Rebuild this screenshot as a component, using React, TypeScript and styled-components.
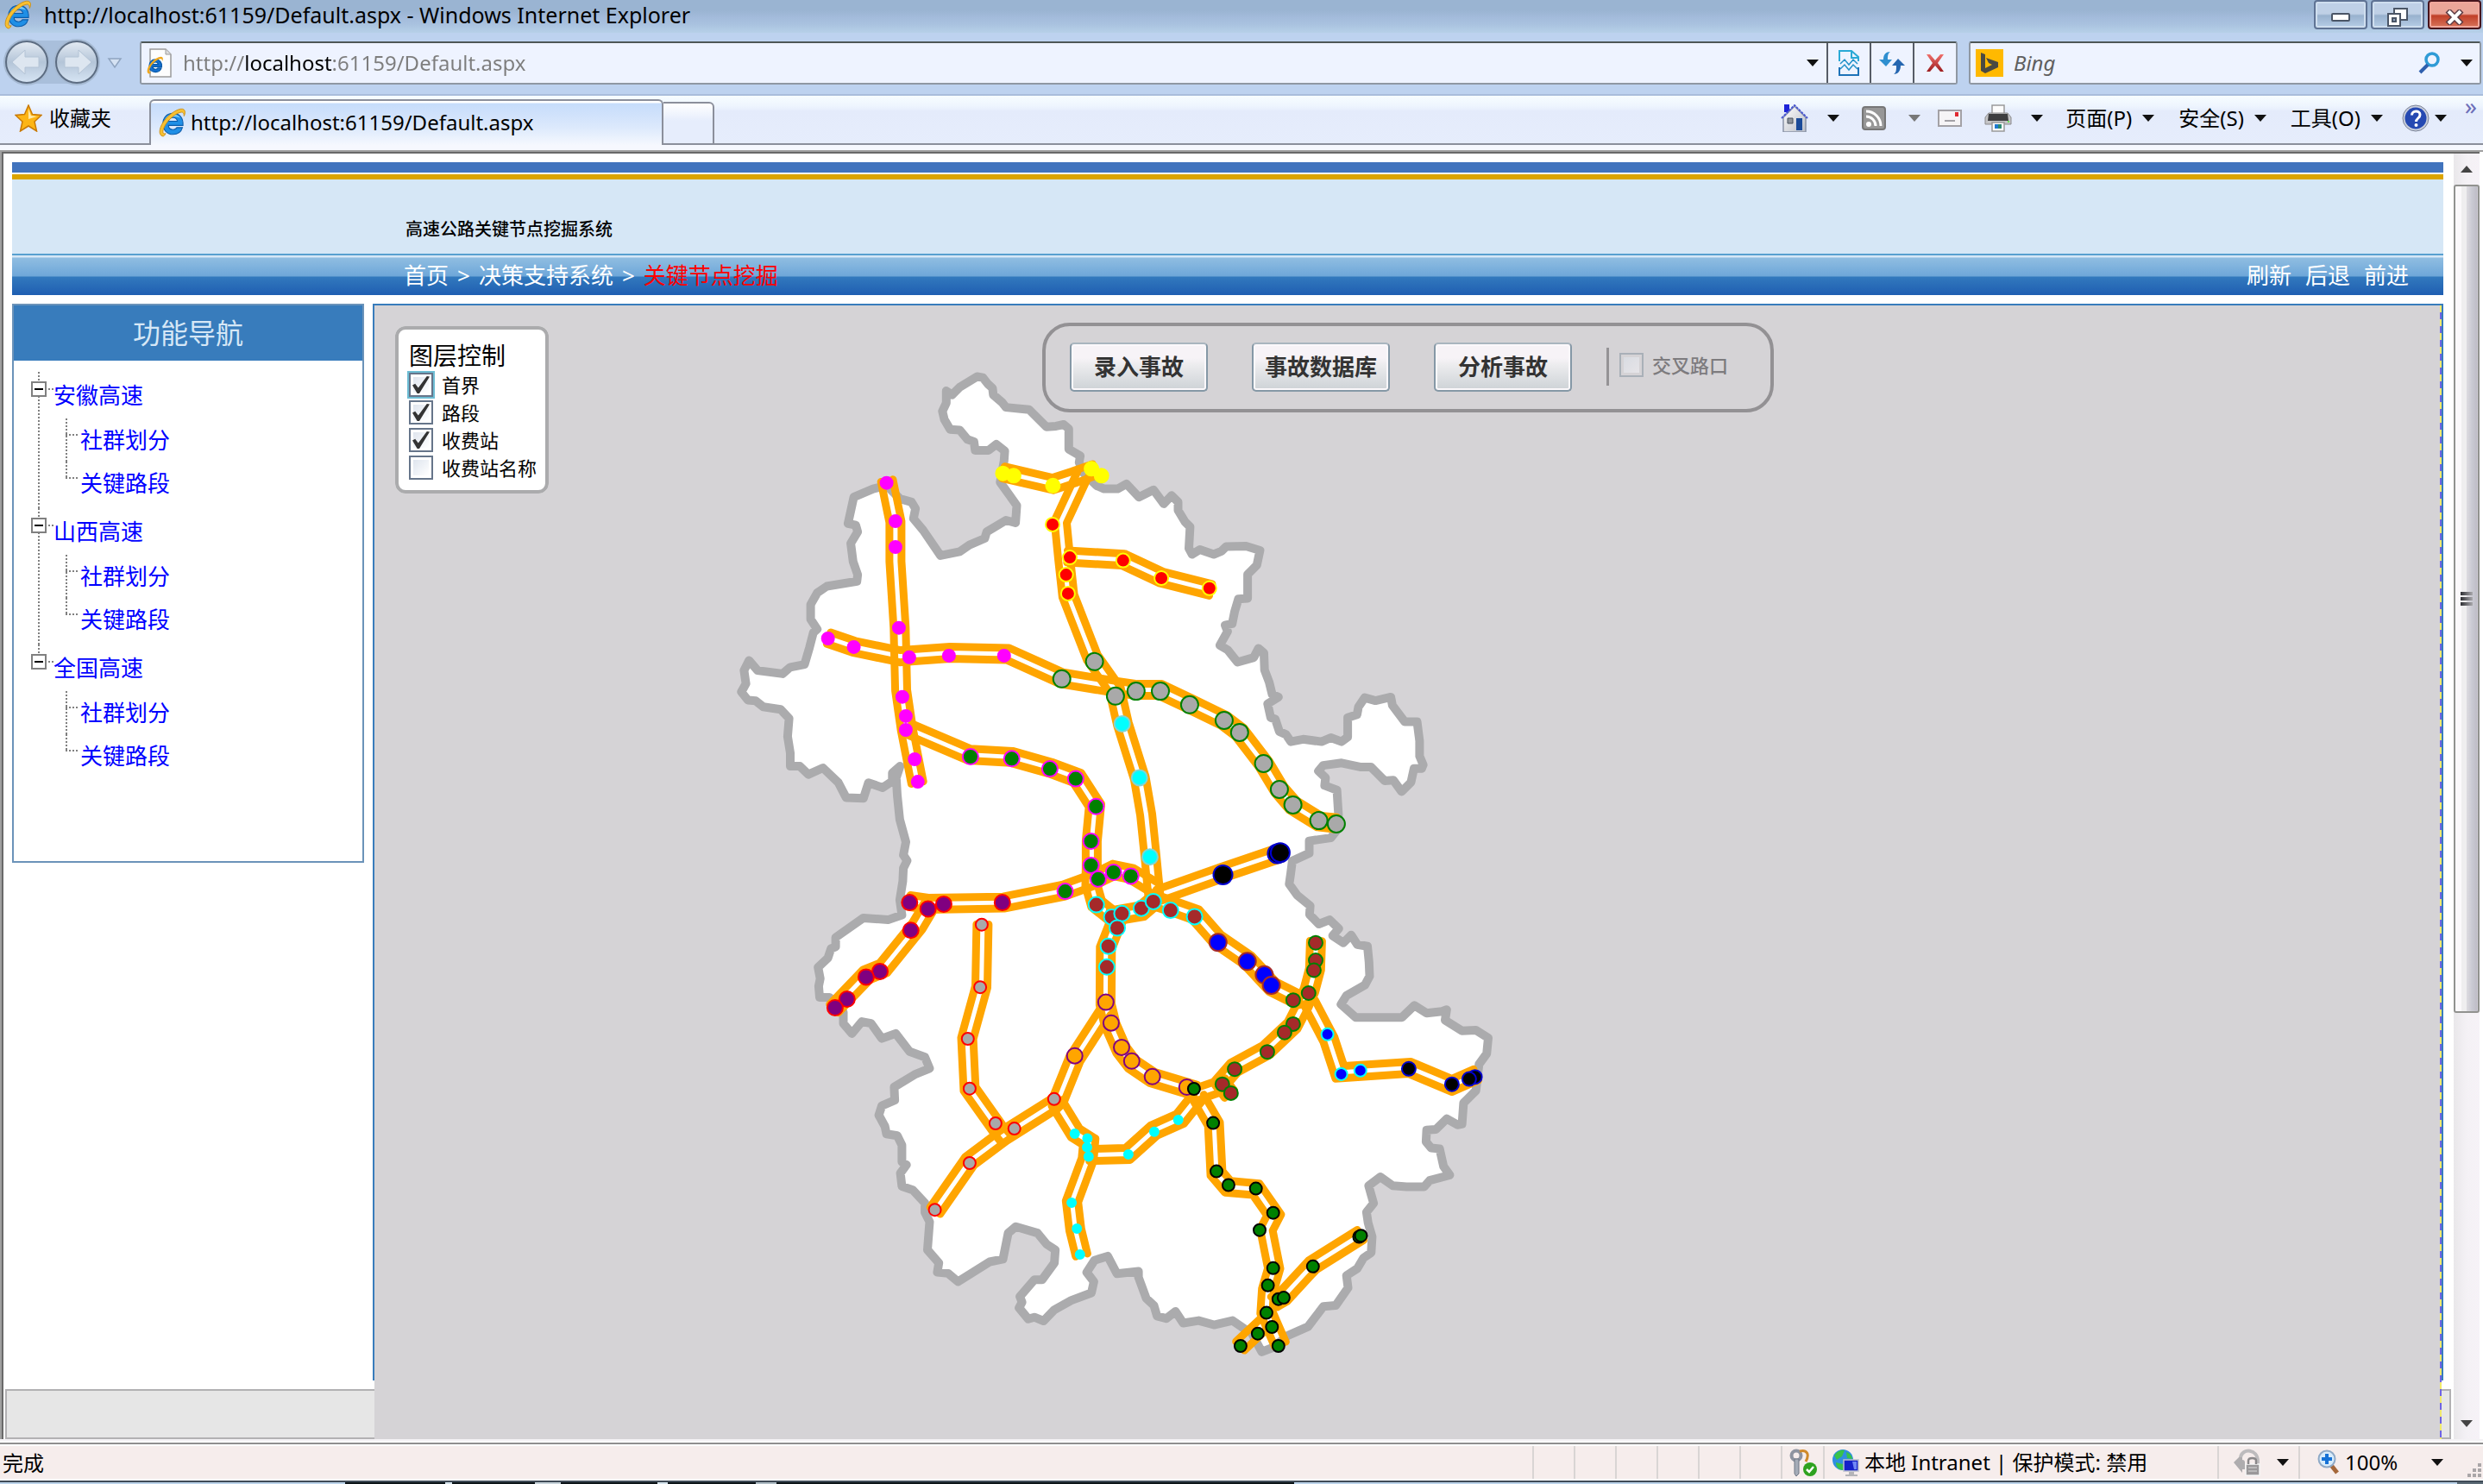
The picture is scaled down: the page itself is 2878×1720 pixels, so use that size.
import React from 'react';
import styled, { createGlobalStyle, css } from 'styled-components';

const Global = createGlobalStyle`
  *, *::before, *::after { box-sizing: border-box; }
  html, body { margin: 0; padding: 0; background: #fff; }
  body, button, input {
    font-family: "Noto Sans", "Noto Sans CJK SC", sans-serif;
    font-size: 24px;
    line-height: 32px;
    color: #000;
  }
  button { padding: 0; border: 0; background: none; }
  a { text-decoration: none; color: inherit; }
  ul { list-style: none; margin: 0; padding: 0; }
  svg { display: block; flex: none; }
`;

/* ---------- window frame ---------- */

const Window = styled.div`
  display: flex;
  flex-direction: column;
  height: 100vh;
  min-height: 1200px;
  overflow: hidden;
`;

const TitleBar = styled.header`
  display: flex;
  align-items: flex-start;
  height: 38px;
  flex: none;
  padding: 0 2px 0 4px;
  background: linear-gradient(#9ab4d2 0 12px, #a3bbdb 20px, #a9c2df 28px, #b6d0e8);
`;

const TitleText = styled.h1`
  margin: 1px 0 0 13px;
  flex: 1;
  font-size: 25px;
  line-height: 32px;
  font-weight: 400;
`;

const WindowButtons = styled.div`
  display: flex;
  gap: 4px;
`;

const WindowButton = styled.button<{ $danger?: boolean }>`
  display: flex;
  align-items: center;
  justify-content: center;
  width: 62px;
  height: 34px;
  padding-top: 6px;
  border: 2px solid ${(p) => (p.$danger ? '#46141c' : '#5f7394')};
  border-radius: 4px;
  box-shadow: inset 0 0 0 2px ${(p) => (p.$danger ? '#f0a79c' : '#cfdeee')};
  background: ${(p) =>
    p.$danger
      ? 'linear-gradient(#eba598 0 14px, #c03f28 16px, #d8755c)'
      : 'linear-gradient(#bfd0e6 0 14px, #98b1ce 16px, #b6cde6)'};
`;

const AddressRow = styled.div`
  display: flex;
  align-items: flex-start;
  flex: none;
  height: 71px;
  padding: 8px 2px 0 4px;
  background: #bdd2ef;
`;

const NavButtons = styled.div`
  display: flex;
  align-items: center;
  width: 158px;
  height: 52px;
`;

const Field = styled.div<{ $grow?: boolean }>`
  display: flex;
  align-items: center;
  height: 50px;
  margin-top: 2px;
  padding-left: 6px;
  border: 2px solid #8f98a3;
  border-top-color: #4d5757;
  border-radius: 3px;
  background: #eef3ff;
  ${(p) => (p.$grow ? 'flex: 1; min-width: 0;' : 'width: 594px; margin-left: 13px; padding-right: 8px;')}
`;

const AddressInput = styled.input`
  flex: 1;
  min-width: 0;
  margin-left: 12px;
  padding: 0;
  border: 0;
  outline: 0;
  color: #7d7d7d;
  background: linear-gradient(90deg, #7d7d7d 0 71px, #000 71px 174px, #7d7d7d 174px);
  background-clip: text;
  -webkit-background-clip: text;
  -webkit-text-fill-color: transparent;
`;

const SearchInput = styled.input`
  flex: 1;
  min-width: 0;
  margin-left: 12px;
  padding: 0;
  border: 0;
  outline: 0;
  background: none;
  font-style: italic;
  &::placeholder { color: #5f5f5f; opacity: 1; }
`;

const FieldButton = styled.button<{ $line?: boolean }>`
  display: flex;
  align-items: center;
  justify-content: center;
  width: ${(p) => (p.$line ? 50 : 32)}px;
  height: 46px;
  ${(p) => p.$line && 'border-left: 2px solid #565c66;'}
`;

/* ---------- tab strip ---------- */

const TabRow = styled.div`
  display: flex;
  align-items: flex-end;
  flex: none;
  height: 59px;
  border-top: 2px solid #a9bddb;
  background: linear-gradient(#f7fdff, #eef5fe 12px, #e4ebfb 18px, #e6edfc);
  box-shadow: inset 0 -2px 0 #8b8f9b;
`;

const Favorites = styled.button`
  display: flex;
  align-items: center;
  gap: 8px;
  width: 173px;
  height: 57px;
  padding: 0 0 6px 17px;
`;

const Tab = styled.div`
  display: flex;
  align-items: center;
  gap: 4px;
  width: 596px;
  height: 53px;
  padding: 0 0 2px 8px;
  border: 2px solid #8b8f9b;
  border-bottom: 0;
  border-radius: 6px 6px 0 0;
  background: linear-gradient(#fff 0 2px, #c6dcfb 3px, #dce9fc 60%, #f5f8fe);
`;

const NewTab = styled.button`
  width: 59px;
  height: 50px;
  border: 2px solid #8b8f9b;
  border-left: 0;
  border-radius: 0 6px 0 0;
  background: linear-gradient(#fff, #e6edfc 20px);
`;

const Commands = styled.div`
  display: flex;
  align-items: center;
  flex: 1;
  justify-content: flex-end;
  height: 57px;
  padding: 0 6px 6px 0;
`;

const Command = styled.button<{ $before: number; $inner?: number }>`
  display: flex;
  align-items: center;
  gap: ${(p) => p.$inner ?? 22}px;
  margin-left: ${(p) => p.$before}px;
`;

const More = styled.button`
  align-self: flex-start;
  width: 16px;
  margin-left: 20px;
  color: #6d6fb8;
  font-size: 28px;
  line-height: 22px;
`;

const TabShelf = styled.div`
  flex: none;
  height: 6px;
  background: #f6f8fe;
`;

/* ---------- document viewport ---------- */

const Viewport = styled.div`
  display: flex;
  flex: 1;
  min-height: 0;
  border-top: 2px solid #a0a0a0;
  border-left: 2px solid #a0a0a0;
  padding-right: 4px;
  background: #fff;
`;

const Page = styled.div`
  position: relative;
  display: flex;
  flex-direction: column;
  flex: 1;
  min-width: 0;
  padding: 10px 12px 0 10px;
  border-top: 2px solid #696969;
  border-left: 2px solid #696969;
`;

const Banner = styled.div`
  height: 106px;
  border-top: 12px solid #4173bd;
  background: linear-gradient(#fff 0 2px, #dba400 2px 8px, #d6e7f6 8px);
  padding: 52px 0 0 456px;
`;

const BannerTitle = styled.h2`
  margin: 0;
  font-size: 20px;
  line-height: 28px;
  font-weight: 500;
`;

const Crumbs = styled.nav`
  display: flex;
  align-items: center;
  justify-content: space-between;
  height: 48px;
  padding: 0 40px 0 454px;
  border-top: 2px solid #58a0d0;
  font-size: 26px;
  color: #fff;
  background: linear-gradient(#d6e7f6 0 2px, #8fbde1 3px, #6ea7d9 24px, #3279bd 25px, #1f5eb2);
`;

const CrumbGroup = styled.div`
  display: flex;
  gap: 10px;
`;

const ActionGroup = styled(CrumbGroup)`
  gap: 16px;
`;

const Current = styled.span`
  color: #f00;
`;

const Columns = styled.div`
  display: flex;
  gap: 10px;
  flex: 1;
  min-height: 0;
  padding-top: 10px;
`;

const FooterBand = styled.div`
  position: absolute;
  left: 2px;
  right: 3px;
  bottom: 0;
  height: 58px;
  border: 2px solid #b2b1b3;
  background: #e6e6e6;
`;

/* ---------- navigation tree ---------- */

const SidePanel = styled.aside`
  flex: none;
  align-self: flex-start;
  width: 408px;
  height: 648px;
  border: 2px solid #6b93b9;
  background: #fff;
`;

const SideTitle = styled.h3`
  margin: 0;
  height: 64px;
  font-size: 32px;
  line-height: 64px;
  font-weight: 400;
  text-align: center;
  color: #d6e7f6;
  background: #387cbc;
`;

const dotsDown = 'repeating-linear-gradient(#808080 0 2px, transparent 2px 4px)';
const dotsAcross = 'repeating-linear-gradient(90deg, #808080 0 2px, transparent 2px 4px)';

const Tree = styled.ul`
  padding: 13px 0 0 20px;
  font-size: 26px;
  color: #00f;
`;

const Branch = styled.li<{ $last?: boolean }>`
  height: 158px;
  background: ${dotsDown} 8px 0 / 2px ${(p) => (p.$last ? '20px' : '100%')} no-repeat;
`;

const BranchRow = styled.div`
  display: flex;
  gap: 8px;
  height: 54px;
  line-height: 54px;
  background: ${dotsAcross} 20px 19px / 8px 2px no-repeat;
`;

const Toggle = styled.button`
  display: flex;
  align-items: center;
  justify-content: center;
  width: 18px;
  height: 18px;
  margin-top: 11px;
  border: 2px solid #808080;
  background: #fff;
  &::before { content: ''; width: 10px; height: 2px; background: #000; }
`;

const Leaf = styled.li<{ $last?: boolean }>`
  height: 50px;
  margin-left: 40px;
  padding-left: 17px;
  line-height: 50px;
  background:
    ${dotsAcross} 0 18px / 16px 2px no-repeat,
    ${dotsDown} 0 0 / 2px ${(p) => (p.$last ? '20px' : '100%')} no-repeat;
`;

/* ---------- map area ---------- */

const MapArea = styled.main`
  position: relative;
  z-index: 1;
  display: flex;
  flex: 1;
  min-width: 0;
  padding: 2px 2px 0 2px;
  &::before {
    content: '';
    position: absolute;
    inset: 0 0 68px 0;
    border: 2px solid #387cbc;
    border-bottom: 0;
  }
`;

const MapCanvas = styled.div`
  position: relative;
  flex: 1;
  overflow: hidden;
  padding: 76px 0 0 406px;
  background:
    repeating-linear-gradient(#f1ea6b 0 8px, #6f64e4 8px 16px) right top / 2px 100% no-repeat,
    #d5d3d6;
`;

const LayerPanel = styled.fieldset`
  position: absolute;
  left: 24px;
  top: 24px;
  width: 178px;
  margin: 0;
  padding: 12px 0 10px 12px;
  border: 4px solid #ababad;
  border-radius: 12px;
  background: #fff;
  font-size: 22px;
`;

const LayerTitle = styled.div`
  font-size: 28px;
  line-height: 36px;
`;

const CheckLine = styled.label<{ $disabled?: boolean }>`
  display: flex;
  align-items: center;
  gap: 10px;
  height: 32px;
  font-size: 22px;
  white-space: nowrap;
  ${(p) => p.$disabled && 'padding-bottom: 4px; height: 36px; font-weight: 500; color: #7d7b7e;'}
`;

const Check = styled.input<{ $focus?: boolean }>`
  appearance: none;
  flex: none;
  width: 28px;
  height: 28px;
  margin: 0;
  border: 2px solid #66758a;
  background: linear-gradient(135deg, #dfe5ee, #fff) content-box #fff;
  padding: 3px;
  display: grid;
  place-content: center;
  ${(p) => p.$focus && css`box-shadow: 0 0 0 2px #6dbdd4;`}
  &:disabled {
    border-color: #a9b0b8;
    background: linear-gradient(135deg, #d9dce2, #e6e4e8) content-box #ebe9ec;
  }
  &:checked::before {
    content: '';
    width: 20px;
    height: 20px;
    background: #333;
    clip-path: polygon(0 52%, 16% 44%, 34% 68%, 84% 0, 100% 2%, 40% 100%, 28% 100%);
  }
`;

const ToolPanel = styled.div`
  position: absolute;
  top: 20px;
  left: 50%;
  transform: translateX(-50%);
  display: flex;
  align-items: center;
  width: 848px;
  height: 104px;
  padding: 0 0 2px 28px;
  border: 4px solid #939194;
  border-radius: 32px;
`;

const ToolButton = styled.button`
  width: 160px;
  height: 57px;
  margin-right: 51px;
  border: 2px solid #8598a6;
  border-top-color: #a9b5bf;
  border-radius: 5px;
  box-shadow: inset 0 0 0 2px #fbf8fb;
  background: linear-gradient(#f7f3f7 0 30%, #ececee 45%, #cdd2d6);
  font-size: 26px;
  font-weight: 700;
  color: #333;
`;

const Divider = styled.span`
  width: 3px;
  height: 44px;
  margin: 0 12px 0 -11px;
  background: #959396;
`;

const Scroll = styled.div`
  display: flex;
  flex-direction: column;
  align-items: center;
  width: 30px;
  border-top: 2px solid #696969;
  background: linear-gradient(90deg, #e9e7ea, #f4f1f5 50%, #f6f2f7);
`;

const ScrollButton = styled.button`
  display: flex;
  align-items: center;
  justify-content: center;
  width: 30px;
  height: 36px;
`;

const Thumb = styled.div`
  display: flex;
  flex-direction: column;
  align-items: center;
  justify-content: center;
  gap: 2px;
  width: 30px;
  height: calc(65% - 8px);
  border: 2px solid #91928f;
  border-radius: 3px;
  background: linear-gradient(90deg, #fbf9fb 0 25%, #efeeef 27% 48%, #dddbe0 50%, #c9c9d2 75%, #bfbdc7 95%, #d5d3da);
`;

const Grip = styled.i`
  width: 14px;
  height: 4px;
  background: linear-gradient(90deg, #2e2e33, #aaa9ad);
`;

/* ---------- status bar ---------- */

const StatusBar = styled.footer`
  display: flex;
  align-items: stretch;
  flex: none;
  height: 48px;
  border-top: 2px solid #f4f2f5;
  border-bottom: 2px solid #fff;
  background: linear-gradient(#fff 0 2px, #8f8f8f 2px 4px, #fff 4px 6px, #f6edec 6px);
`;

const StatusMessage = styled.div`
  flex: 1;
  padding: 10px 0 0 3px;
`;

const StatusCell = styled.div<{ $width: number; $pad?: number }>`
  display: flex;
  align-items: center;
  width: ${(p) => p.$width}px;
  margin-top: 6px;
  padding-left: ${(p) => p.$pad ?? 0}px;
  gap: 6px;
  border-left: 2px solid #d9d5d4;
`;

const Push = styled.span`
  flex: 1;
`;

const TaskbarEdge = styled.div`
  flex: none;
  height: 4px;
  border-top: 2px solid #3f4b57;
  background: linear-gradient(90deg, #bcd3ea 0 400px, #0d1518 400px 516px, #d5e3ec 516px 524px, #0d1518 524px 620px,
    #c7d3da 620px 650px, #0d1518 650px 762px, #d5e3ec 762px 774px, #0d1518 774px 876px, #aebcc4 876px 900px,
    #0d1518 900px 1500px, #bcd3ea 1500px calc(100% - 30px), #5b6a75 calc(100% - 30px));
`;

/* ---------- icons ---------- */

const Caret = ({ color = '#111' }: { color?: string }) => (
  <svg width="14" height="8" viewBox="0 0 14 8"><path d="M0 0h14L7 8z" fill={color} /></svg>
);

const IeLogo = () => (
  <svg width="34" height="34" viewBox="1 0 31 32">
    <path d="M17 6C10 6 6 11 6 17.500S10.500 29 17 29c5 0 8.800-2.500 10.300-7.500h-6.100c-.8 1.600-2.200 2.300-4.100 2.300-3 0-4.900-1.700-5.100-4.600h15.900C28.400 11 24.300 6 17 6zm-5 8.600c.5-2.600 2.200-4.100 4.900-4.100s4.500 1.500 4.900 4.100z" fill="#1f8fe6" stroke="#0b5cab" strokeWidth="1" />
    <path d="M8 13c2-4 5-6 9-6 3 0 6 1 8 4-5-2-11-2-17 2z" fill="#7fd0fb" />
    <path d="M6 31C0 30 2 20 9 12 16 4 26-1 29 2c2 2 1 5 0 7 0-3-1-5-4-4-5 1-12 7-16 13-4 7-4 11 0 10-1 2-2 3-3 3z" fill="#f7c031" stroke="#c98a10" strokeWidth=".8" />
  </svg>
);

const PageLogo = () => (
  <svg width="30" height="34" viewBox="0 0 30 34">
    <path d="M4 1h18l6 6v26H4z" fill="#fdfdfd" stroke="#9b9b9b" strokeWidth="1.500" />
    <path d="M22 1v6h6" fill="#ddd" stroke="#9b9b9b" />
    <g transform="translate(-1 9) scale(.66)">
      <path d="M17 6C10 6 6 11 6 17.500S10.500 28 17 28c5 0 8.800-2.500 10.300-7h-6.100c-.8 1.600-2.200 2.300-4.100 2.300-3 0-4.900-1.700-5.100-4.600h15.900C28.400 11 24.300 6 17 6zm-5 8.600c.5-2.600 2.200-4.100 4.900-4.100s4.500 1.500 4.900 4.100z" fill="#1570d0" stroke="#0b5cab" strokeWidth="2" />
      <path d="M6 31C0 30 2 20 9 12 16 4 26-1 29 2c2 2 1 5 0 7 0-3-1-5-4-4-5 1-12 7-16 13-4 7-4 11 0 10-1 2-2 3-3 3z" fill="#f0a81c" />
    </g>
  </svg>
);

const NavOrbs = () => (
  <svg width="112" height="56" viewBox="0 0 112 56">
    <defs>
      <linearGradient id="orb" x1="0" y1="0" x2="0" y2="1">
        <stop offset="0" stopColor="#e4ebf3" />
        <stop offset=".5" stopColor="#b4c5d8" />
        <stop offset="1" stopColor="#d7e5f4" />
      </linearGradient>
    </defs>
    <path d="M27 3h58v50H27z" fill="#a9bfdb" />
    <circle cx="27" cy="28" r="27" fill="#a6bad3" />
    <circle cx="85" cy="28" r="27" fill="#a6bad3" />
    <circle cx="27" cy="28" r="24" fill="url(#orb)" stroke="#5d6d82" strokeWidth="2" />
    <circle cx="85" cy="28" r="24" fill="url(#orb)" stroke="#5d6d82" strokeWidth="2" />
    <path d="M10 28l15-14v8h16v12H25v8z" fill="#dde6f0" stroke="#b4c4d6" />
    <path d="M102 28L87 14v8H71v12h16v8z" fill="#dde6f0" stroke="#b4c4d6" />
  </svg>
);

const Star = () => (
  <svg width="32" height="32" viewBox="0 0 32 32">
    <path d="M16 1l4.500 10.500L31 12.500l-8 7.500 2.500 11L16 25l-9.500 6L9 20l-8-7.500 10.500-1z" fill="#fdb515" stroke="#c97a06" strokeWidth="1.500" />
    <path d="M16 5l3 8 7 1-10 3z" fill="#ffe9a8" />
  </svg>
);

const Compat = () => (
  <svg width="24" height="30" viewBox="0 0 24 30" fill="none" strokeWidth="2">
    <path d="M1 13V1h14l8 7v5" stroke="#2aa9d6" />
    <path d="M15 1v8h8" stroke="#2aa9d6" />
    <path d="M2 16l5-5 5 6 5-6 5 5M2 22l5-5 5 6 5-6 5 5" stroke="#2391c8" strokeWidth="1.500" />
    <path d="M1 20v9h22v-9" stroke="#1d72b8" />
  </svg>
);

const Refresh = () => (
  <svg width="30" height="28" viewBox="0 0 30 28">
    <path d="M13 1C8 1 5 4 5 10H0l8 8 7-8h-5c0-4 0-7 3-9z" fill="#2f8fd0" />
    <path d="M17 27c5 0 8-4 8-10h5l-8-8-7 8h5c0 5 0 8-3 10z" fill="#2566b0" />
  </svg>
);

const Stop = () => (
  <svg width="22" height="22" viewBox="0 0 22 22">
    <defs>
      <linearGradient id="stop" x1="0" y1="0" x2="0" y2="1"><stop offset="0" stopColor="#f0706c" /><stop offset="1" stopColor="#9c1c20" /></linearGradient>
    </defs>
    <path d="M1 1h4l6 7 6-7h4l-7 10 7 10h-4l-6-7-6 7H1l7-10z" fill="url(#stop)" />
  </svg>
);

const BingLogo = () => (
  <svg width="32" height="32" viewBox="0 0 32 32">
    <path d="M0 0h32v32H0z" fill="#ffb900" />
    <path d="M6 4l5 2v16l8-4-4-2-3-6 14 5v6L11 28l-5-3z" fill="#4a4a42" />
  </svg>
);

const Magnifier = () => (
  <svg width="26" height="26" viewBox="0 0 26 26" fill="none">
    <circle cx="16" cy="9" r="7" stroke="#2f9bd6" strokeWidth="3.500" />
    <path d="M11 15L2 24" stroke="#2f5fae" strokeWidth="4" />
  </svg>
);

const Home = () => (
  <svg width="32" height="32" viewBox="0 0 32 32">
    <defs>
      <linearGradient id="wall" x1="0" y1="0" x2="1" y2="1"><stop offset="0" stopColor="#fff" /><stop offset="1" stopColor="#b9bdc6" /></linearGradient>
    </defs>
    <path d="M4 0h6v9H4z" fill="#1c22d8" />
    <path d="M3 15L16 2l13 13v17H3z" fill="url(#wall)" stroke="#8a94a8" strokeWidth="1.500" />
    <path d="M1 16L16 1l15 15" fill="none" stroke="#4a58d0" strokeWidth="2" strokeDasharray="3 1" />
    <path d="M18 16h7v14h-7z" fill="#1a4a99" />
    <path d="M8 16h6v6H8z" fill="#8f949c" stroke="#47505c" />
  </svg>
);

const Rss = () => (
  <svg width="28" height="28" viewBox="0 0 28 28" fill="none">
    <rect x="1" y="1" width="26" height="26" rx="3" fill="#979797" stroke="#767676" strokeWidth="2" />
    <circle cx="8" cy="21" r="3" fill="#fff" />
    <path d="M5 12a11 11 0 0 1 11 11M5 6a17 17 0 0 1 17 17" stroke="#fff" strokeWidth="3" />
  </svg>
);

const Mail = () => (
  <svg width="28" height="20" viewBox="0 0 28 20">
    <path d="M1 1h26v18H1z" fill="#f6f4f6" stroke="#a3a1a6" strokeWidth="2" />
    <path d="M20 3h4v5h-4z" fill="#e02a32" />
    <path d="M8 13h12" stroke="#a3a1a6" strokeWidth="2" />
  </svg>
);

const Printer = () => (
  <svg width="32" height="32" viewBox="0 0 32 32">
    <path d="M9 1h14v11H9z" fill="#fcfcfc" stroke="#9a9a9a" strokeWidth="1.500" />
    <path d="M5 10h22l4 5v8H1v-8z" fill="#c4c4c6" stroke="#8b8b8d" />
    <path d="M5 11h22l1 8H4z" fill="#3e3e40" />
    <path d="M9 21h14v10H9z" fill="#fff" stroke="#999" strokeWidth="1.500" />
    <path d="M12 23h4v5h-4z" fill="#1f7ad1" />
    <path d="M16 23h4v5h-4z" fill="#2b8a72" />
    <path d="M27 19h2v2h-2z" fill="#6ee05a" />
  </svg>
);

const Help = () => (
  <svg width="32" height="32" viewBox="0 0 32 32">
    <circle cx="16" cy="16" r="15" fill="#c9cfdb" stroke="#7a8298" />
    <circle cx="16" cy="16" r="12.500" fill="#2549b2" />
    <path d="M11.500 12.500c0-6 9.500-6 9.500-.5 0 4-4.500 4-4.500 8" fill="none" stroke="#fff" strokeWidth="3" />
    <circle cx="16.500" cy="24" r="2" fill="#fff" />
  </svg>
);

const Keys = () => (
  <svg width="32" height="32" viewBox="0 0 32 32">
    <circle cx="8" cy="8" r="5.500" fill="none" stroke="#8d93a0" strokeWidth="4" />
    <path d="M12 3c8-2 12 3 7 12" fill="none" stroke="#d08a2a" strokeWidth="3" />
    <path d="M6 12h5v17l-3 3-2-3z" fill="#a5acb8" stroke="#6f7684" />
    <circle cx="24" cy="24" r="8" fill="#2ea21f" />
    <path d="M20 24l3 3 5-6" fill="none" stroke="#fff" strokeWidth="2.500" />
  </svg>
);

const Globe = () => (
  <svg width="32" height="32" viewBox="0 0 32 32">
    <circle cx="13" cy="13" r="12" fill="#2f8fe0" />
    <path d="M3 8c4-6 9-7 12-6l-3 7-6 4zM5 16l8 2 1 7C8 25 5 21 5 16zM17 4c4 1 7 5 7 8l-6-1z" fill="#39c24a" />
    <path d="M14 13h17v13H14z" fill="#1420c8" stroke="#b9bfcc" strokeWidth="1.500" />
    <path d="M24 15h5v9h-3z" fill="#6f86f5" />
    <path d="M20 27h6v3h4v2H16v-2h4z" fill="#b4b4b8" />
  </svg>
);

const Lock = () => (
  <svg width="34" height="32" viewBox="0 0 34 32">
    <path d="M2 16L12 6v7c2 0 3 1 3 3v8h-3v4z" fill="#aeacae" />
    <path d="M10 10C12-1 30 0 30 15v4" fill="none" stroke="#bdbbbd" strokeWidth="4" />
    <path d="M16 18h16v13H16z" fill="#9a989a" stroke="#f6f6f6" strokeWidth="1.500" />
    <path d="M19 18v-4c0-4 9-4 9 0v4" fill="none" stroke="#8a888a" strokeWidth="2.500" />
    <path d="M19 22h10M19 26h10" stroke="#c5c3c5" strokeWidth="1.500" />
  </svg>
);

const ZoomGlass = () => (
  <svg width="26" height="30" viewBox="0 0 26 30">
    <path d="M15 17l8 10" stroke="#a5673a" strokeWidth="5" />
    <circle cx="11" cy="11" r="9.500" fill="#d8ecfb" stroke="#8fa9c6" strokeWidth="2" />
    <path d="M11 5v12M5 11h12" stroke="#1672d6" strokeWidth="4" />
  </svg>
);

/* ---------- map data: every sheet has its own origin and scale ---------- */

type Pt = [number, number];
type SheetName = 'nw' | 'ne' | 'sw' | 'se';

const sheets: Record<SheetName, { x: number; y: number; kx: number; ky: number }> = {
  nw: { x: 820, y: 360, kx: 2.24, ky: 2.6133 },
  ne: { x: 1180, y: 480, kx: 2.8, ky: 2.8 },
  sw: { x: 840, y: 900, kx: 2.8, ky: 2.3059 },
  se: { x: 1200, y: 960, kx: 2.8, ky: 2.45 },
};

const on = (name: SheetName, list: string): Pt[] => {
  const s = sheets[name];
  return list.trim().split(/\s+/).map((pair) => {
    const [a, b] = pair.split(',').map(Number);
    return [s.x + a / s.kx, s.y + b / s.ky];
  });
};

const toPath = (pts: Pt[]) => 'M' + pts.map(([x, y]) => `${x.toFixed(1)} ${y.toFixed(1)}`).join('L');

const province: Pt[] = [
  ...on('nw', `770,455 772,425 750,405 730,423 695,423 692,397 675,390 655,362 630,360 615,330 610,305 620,280 620,243
    635,255 655,232 700,200 715,203 728,222 740,235 742,255 765,278 775,293 835,300 880,352 905,350 925,345 938,358
    938,420 968,440 965,460 975,490 1010,530 1030,540 1065,540 1088,525 1120,565 1158,543 1185,585 1205,560 1222,580
    1222,605 1240,640 1253,655 1250,720`),
  ...on('ne', `565,455 590,440 635,455 660,445 675,430 740,428 785,442 775,490 745,520 745,598 715,600 703,640 695,680
    672,685 680,705 655,750 680,765 712,805 765,790 780,760 798,775 800,830 815,870 825,910 845,918 810,940 820,985
    835,990 848,1030 870,1040 885,1063 925,1055 985,1063 1015,1050 1050,1063 1070,1048 1070,985 1100,975 1105,950
    1125,920 1160,930 1210,918 1215,945 1255,998 1295,998 1303,1060 1303,1110 1315,1138 1310,1150 1285,1150 1275,1195
    1245,1225 1218,1188 1190,1190 1160,1160 1145,1145 1110,1145 1050,1132 990,1140 975,1158 998,1180 995,1205
    1035,1220 1040,1300 1035,1350 1015,1375 945,1385 945,1425 890,1450 885,1490 880,1525`),
  ...on('se', `850,190 892,220 890,245 920,272 955,260 985,285 965,305 1000,325 1025,303 1045,330 1078,335 1083,380
    1085,420 1070,445 1010,475 992,500 1040,537 1190,537 1230,503 1270,525 1320,520 1335,515 1330,545 1385,575
    1430,573 1470,595 1465,640 1440,670 1430,745 1390,780 1385,840 1370,842 1335,825 1300,855 1270,857 1268,890
    1285,908 1312,910 1325,960 1345,985 1280,1000 1262,1018 1205,1018 1160,1015 1120,990 1082,1015 1098,1065
    1075,1090 1080,1120 1093,1160 1090,1205 1065,1220 1045,1250 1010,1270 1015,1305 975,1355 935,1358 885,1415
    820,1440 770,1475 735,1487 700,1430 685,1425 640,1398 580,1410 530,1398 480,1405 455,1372 425,1392 395,1385
    385,1355 360,1335 335,1275 335,1258 265,1265 235,1215`),
  ...on('sw', `1200,1293 1175,1325 1198,1350 1190,1380 1125,1400 1070,1425 1035,1455 1005,1445 985,1450 955,1420
    965,1405 958,1390 1005,1345 1030,1345 1070,1300 1073,1265 1045,1250 1015,1220 945,1203 920,1220 903,1290 860,1297
    757,1350 725,1328 690,1325 695,1300 658,1265 665,1190 650,1165 650,1140 610,1105 575,1095 570,1060 590,1038
    575,1030 575,985 560,960 525,955 520,935 500,905 510,880 552,865 550,830 620,795 665,780 650,750 600,735 555,687
    510,700 475,660 445,655 413,687 385,660 385,630 340,590 308,590 305,560 310,540 303,510 335,485 345,460 360,455
    360,430 450,378 530,383 575,370 568,330 578,280 580,245 592,225 580,210 588,175 568,115 560,50`),
  ...on('nw', `490,1415 500,1380 480,1400 480,1425 455,1445 418,1430 405,1477 360,1475 340,1430 300,1385 262,1405
    240,1380 215,1380 215,1340 208,1290 212,1235 190,1208 145,1200 125,1182 105,1180 88,1155 100,1130 95,1090
    108,1060 130,1090 195,1100 215,1080 252,1072 265,1020 275,975 285,965 268,935 268,890 285,855 310,835 388,820
    390,800 378,760 372,705 390,670 385,650 365,645 380,565 430,540 465,530 500,570 530,580 540,600 535,630 560,665
    605,742 655,730 680,710 720,690 725,670 775,635 800,643 803,590 785,560 760,520`),
];

const roads: Pt[][] = [
  on('nw', '466,515 488,640 488,760 499,960 503,1150 518,1270 545,1430'),
  [
    ...on('nw', '315,992 380,1018 500,1047 630,1036 780,1040'),
    ...on('ne', '142,857 315,885 385,895 462,895 557,940 670,995 720,1033 798,1135 848,1218 893,1270 977,1322 1033,1328'),
  ],
  on('nw', '768,490 897,525 950,505 1005,482'),
  [
    ...on('nw', '975,495 917,640'),
    ...on('ne', '150,470 163,590 241,790 315,895 340,1005 395,1180 416,1300 430,1435 442,1560'),
  ],
  on('ne', '160,462 341,472 465,530 625,570'),
  [
    ...on('nw', '525,1268 680,1345 790,1352 890,1385 960,1415'),
    ...on('ne', '250,1270 239,1385 239,1465'),
    ...on('sw', '1190,290 1207,340 1260,375'),
  ],
  on('sw', '600,333 660,340 905,337 1100,305 1200,275 1262,250 1320,260 1400,300'),
  on('sw', '665,345 625,400 515,512 460,530 355,620'),
  on('se', '400,190 610,125 795,70'),
  on('se', '245,250 345,235 385,205 440,220 520,245 590,315 690,375 770,450 850,485 890,480'),
  on('se', '890,495 953,600 988,693 1215,680 1352,730 1430,700'),
  on('se', '265,260 229,340 228,500 245,560 280,630 315,670 380,708 520,745'),
  on('se', '525,755 590,735 645,680 750,630 835,560 870,500 890,460 908,400 911,320'),
  on('se', '600,720 630,755'),
  on('se', '525,765 470,825 385,858 300,925 175,928'),
  on('se', '70,780 130,865 175,890 170,940 119,1060 130,1140 150,1212'),
  [...on('se', '228,520 128,655 75,770'), ...on('sw', '1069,875 905,960 795,1028 683,1160')],
  on('sw', '837,395 833,562 787,700 795,835 890,945 910,965'),
  on('se', '530,765 580,840 588,980 625,1018 717,1025 775,1098 750,1140 775,1250 755,1310 750,1375 795,1465'),
  on('se', '750,1400 665,1470'),
  on('se', '775,1345 805,1330 900,1240 1055,1155'),
];

/* carriageways run parallel to the centre line */
const shift = (pts: Pt[], d: number): Pt[] =>
  pts.map((p, i) => {
    const a = pts[Math.max(i - 1, 0)];
    const b = pts[Math.min(i + 1, pts.length - 1)];
    const unit = (u: Pt, v: Pt): Pt => {
      const l = Math.hypot(v[0] - u[0], v[1] - u[1]) || 1;
      return [(v[0] - u[0]) / l, (v[1] - u[1]) / l];
    };
    const s = i === 0 ? unit(p, b) : unit(a, p);
    const e = i === pts.length - 1 ? s : unit(p, b);
    const nx = -(s[1] + e[1]);
    const ny = s[0] + e[0];
    const l = Math.hypot(nx, ny) || 1;
    const k = d / Math.max(0.6, (nx * -s[1] + ny * s[0]) / l);
    return [p[0] + (nx / l) * k, p[1] + (ny / l) * k];
  });

type Station = { fill: string; ring: string; r: number; at: Pt[] };

const stations: Station[] = [
  { fill: '#ff00ff', ring: '#ff00ff', r: 7, at: on('nw', '465,522 488,638 488,716 497,961 313,993 380,1019 524,1050 627,1045 770,1045 506,1170 515,1228 515,1270 538,1359 546,1427') },
  { fill: '#ffff00', ring: '#ffff00', r: 8, at: on('nw', '767,493 795,500 897,530 997,479 1023,500') },
  { fill: '#ff0000', ring: '#ffff00', r: 8, at: on('ne', '112,358 168,465 156,521 162,582 341,475 465,532 621,565') },
  { fill: '#00ffff', ring: '#7fd4d4', r: 9, at: on('ne', '338,1005 394,1180 428,1437') },
  { fill: '#a9a9a9', ring: '#008000', r: 10, at: on('ne', '248,803 142,859 316,915 383,899 462,899 557,943 669,994 719,1033 797,1134 848,1218 892,1268 976,1319 1033,1330') },
  { fill: '#008000', ring: '#ff00ff', r: 9, at: [...on('nw', '683,1351 790,1357 889,1388 956,1418 1009,1502'), ...on('ne', '237,1386 237,1464'), ...on('sw', '1212,274 1262,256 1318,266 1105,307')] },
  { fill: '#000000', ring: '#0000cd', r: 11, at: on('se', '609,132 785,72 795,69') },
  { fill: '#800080', ring: '#ff0000', r: 9, at: on('sw', '600,337 660,354 711,341 901,337 604,411 504,521 459,536 397,595 358,618') },
  { fill: '#a52a2a', ring: '#00ffff', r: 9, at: on('se', '198,217 248,252 281,242 266,283 237,335 232,394 344,227 383,208 439,233 517,251') },
  { fill: '#0000ff', ring: '#a52a2a', r: 10, at: on('se', '593,324 688,378 743,416 766,446') },
  { fill: '#a52a2a', ring: '#008000', r: 8, at: on('se', '910,325 910,375 904,403 887,468 837,488 837,556 809,580 753,635 647,684 607,727 635,752') },
  { fill: '#0000ff', ring: '#00ffff', r: 7, at: on('se', '948,585 993,698 1055,688') },
  { fill: '#000000', ring: '#0000cd', r: 8, at: on('se', '1212,683 1352,727 1427,706 1408,712') },
  { fill: '#ffa500', ring: '#800080', r: 9, at: on('se', '229,494 246,553 280,622 313,661 380,705 492,735 128,646') },
  { fill: '#a9a9a9', ring: '#ff0000', r: 7, at: on('sw', '834,396 829,563 789,701 795,834 879,927 940,941 1069,862 795,1033 682,1158') },
  { fill: '#00ffff', ring: '#00ffff', r: 5, at: on('se', '128,867 169,881 168,906 173,932 302,926 386,862 464,828 118,1063 135,1137 145,1210') },
  { fill: '#008000', ring: '#000000', r: 7, at: on('se', '515,740 577,837 588,974 627,1013 716,1023 772,1092 728,1141 772,1249 755,1298 789,1337 806,1333 901,1244 1051,1160 1057,1157 750,1376 768,1416 722,1435 666,1470 789,1470') },
];

const RoadMap = () => (
  <svg width="900" height="1160" viewBox="840 430 900 1160" role="img" aria-label="安徽高速">
    <path d={toPath(province) + 'Z'} fill="#fff" stroke="#ababad" strokeWidth="10" strokeLinejoin="round" />
    <g fill="none" stroke="#ffa500" strokeWidth="9" strokeLinejoin="round" strokeLinecap="round">
      {roads.map((r, i) => (
        <React.Fragment key={i}>
          <path d={toPath(shift(r, 7))} />
          <path d={toPath(shift(r, -7))} />
        </React.Fragment>
      ))}
    </g>
    {stations.map((s, i) => (
      <g key={i} fill={s.fill} stroke={s.ring} strokeWidth="2">
        {s.at.map(([x, y], j) => <circle key={j} cx={x.toFixed(1)} cy={y.toFixed(1)} r={s.r} />)}
      </g>
    ))}
  </svg>
);

const regions = ['安徽高速', '山西高速', '全国高速'];
const leaves = ['社群划分', '关键路段'];
const layers = [
  { name: '首界', on: true },
  { name: '路段', on: true },
  { name: '收费站', on: true },
  { name: '收费站名称', on: false },
];

export default function App() {
  return (
    <Window>
      <Global />
      <TitleBar>
        <IeLogo />
        <TitleText>http://localhost:61159/Default.aspx - Windows Internet Explorer</TitleText>
        <WindowButtons>
          <WindowButton aria-label="最小化">
            <svg width="22" height="10" viewBox="0 0 22 10"><rect x="1" y="1" width="20" height="8" rx="1" fill="#fff" stroke="#4a5566" strokeWidth="2" /></svg>
          </WindowButton>
          <WindowButton aria-label="还原">
            <svg width="24" height="22" viewBox="0 0 24 22" fill="#fff" stroke="#4a5566" strokeWidth="2">
              <path d="M8 1h15v13H8z" /><path d="M1 7h14v14H1z" /><path d="M6 12h4v4H6z" fill="#8fa5c2" />
            </svg>
          </WindowButton>
          <WindowButton $danger aria-label="关闭">
            <svg width="22" height="18" viewBox="0 0 22 18"><path d="M3 1l16 16M19 1L3 17" stroke="#5b3a42" strokeWidth="7" /><path d="M4 2l14 14M18 2L4 16" stroke="#fff" strokeWidth="4" /></svg>
          </WindowButton>
        </WindowButtons>
      </TitleBar>

      <AddressRow>
        <NavButtons>
          <NavOrbs />
          <svg width="34" height="20" viewBox="0 0 34 20"><path d="M10 6h14l-7 10z" fill="#d5e2f3" stroke="#8fa4c0" strokeWidth="1.500" /></svg>
        </NavButtons>
        <Field $grow>
          <PageLogo />
          <AddressInput aria-label="地址" defaultValue="http://localhost:61159/Default.aspx" />
          <FieldButton aria-label="展开地址"><Caret /></FieldButton>
          <FieldButton $line aria-label="兼容性视图"><Compat /></FieldButton>
          <FieldButton $line aria-label="刷新页面"><Refresh /></FieldButton>
          <FieldButton $line aria-label="停止"><Stop /></FieldButton>
        </Field>
        <Field>
          <BingLogo />
          <SearchInput aria-label="搜索" placeholder="Bing" />
          <FieldButton aria-label="搜索"><Magnifier /></FieldButton>
          <Command $before={20} aria-label="搜索选项"><Caret /></Command>
        </Field>
      </AddressRow>

      <TabRow>
        <Favorites><Star />收藏夹</Favorites>
        <Tab><IeLogo />http://localhost:61159/Default.aspx</Tab>
        <NewTab aria-label="新选项卡" />
        <Commands>
          <Command $before={0} aria-label="主页"><Home /><Caret /></Command>
          <Command $before={26} $inner={26} aria-label="源"><Rss /><Caret color="#777" /></Command>
          <Command $before={20} aria-label="邮件"><Mail /></Command>
          <Command $before={26} aria-label="打印"><Printer /><Caret /></Command>
          <Command $before={26} $inner={12}>页面(P)<Caret /></Command>
          <Command $before={28} $inner={12}>安全(S)<Caret /></Command>
          <Command $before={28} $inner={12}>工具(O)<Caret /></Command>
          <Command $before={22} $inner={6} aria-label="帮助"><Help /><Caret /></Command>
          <More aria-label="更多">»</More>
        </Commands>
      </TabRow>
      <TabShelf />

      <Viewport>
        <Page>
          <Banner><BannerTitle>高速公路关键节点挖掘系统</BannerTitle></Banner>
          <Crumbs>
            <CrumbGroup>
              <a href="#home">首页</a><span>&gt;</span><a href="#decision">决策支持系统</a><span>&gt;</span><Current>关键节点挖掘</Current>
            </CrumbGroup>
            <ActionGroup>
              <a href="#reload">刷新</a><a href="#back">后退</a><a href="#forward">前进</a>
            </ActionGroup>
          </Crumbs>
          <FooterBand />
          <Columns>
            <SidePanel>
              <SideTitle>功能导航</SideTitle>
              <Tree>
                {regions.map((region, i) => (
                  <Branch key={region} $last={i === regions.length - 1}>
                    <BranchRow>
                      <Toggle aria-label={'折叠' + region} />
                      <a href={`#region-${i}`}>{region}</a>
                    </BranchRow>
                    <ul>
                      {leaves.map((leaf, j) => (
                        <Leaf key={leaf} $last={j === leaves.length - 1}><a href={`#leaf-${i}-${j}`}>{leaf}</a></Leaf>
                      ))}
                    </ul>
                  </Branch>
                ))}
              </Tree>
            </SidePanel>
            <MapArea>
              <MapCanvas>
                <RoadMap />
                <LayerPanel>
                  <LayerTitle>图层控制</LayerTitle>
                  {layers.map((l, i) => (
                    <CheckLine key={l.name}>
                      <Check type="checkbox" defaultChecked={l.on} $focus={i === 0} />
                      {l.name}
                    </CheckLine>
                  ))}
                </LayerPanel>
                <ToolPanel>
                  <ToolButton>录入事故</ToolButton>
                  <ToolButton>事故数据库</ToolButton>
                  <ToolButton>分析事故</ToolButton>
                  <Divider />
                  <CheckLine $disabled><Check type="checkbox" disabled />交叉路口</CheckLine>
                </ToolPanel>
              </MapCanvas>
            </MapArea>
          </Columns>
        </Page>
        <Scroll>
          <ScrollButton aria-label="向上滚动"><svg width="14" height="8" viewBox="0 0 14 8"><path d="M7 0l7 8H0z" fill="#444" /></svg></ScrollButton>
          <Thumb><Grip /><Grip /><Grip /></Thumb>
          <Push />
          <ScrollButton aria-label="向下滚动"><Caret color="#444" /></ScrollButton>
        </Scroll>
      </Viewport>

      <StatusBar>
        <StatusMessage>完成</StatusMessage>
        {[0, 1, 2, 3, 4, 5].map((n) => <StatusCell key={n} $width={48} />)}
        <StatusCell $width={49} $pad={8}><Keys /></StatusCell>
        <StatusCell $width={457} $pad={8}><Globe />本地 Intranet | 保护模式: 禁用</StatusCell>
        <StatusCell $width={94} $pad={15}><Lock /><Push /><Caret /><Push /></StatusCell>
        <StatusCell $width={214} $pad={20}>
          <ZoomGlass />100%<Push /><Caret />
          <svg width="40" height="38" viewBox="0 0 40 38" fill="#aaa6a8"><path d="M34 20h4v4h-4zM28 26h4v4h-4zM34 26h4v4h-4zM22 32h4v4h-4zM28 32h4v4h-4zM34 32h4v4h-4z" /></svg>
        </StatusCell>
      </StatusBar>
      <TaskbarEdge />
    </Window>
  );
}
